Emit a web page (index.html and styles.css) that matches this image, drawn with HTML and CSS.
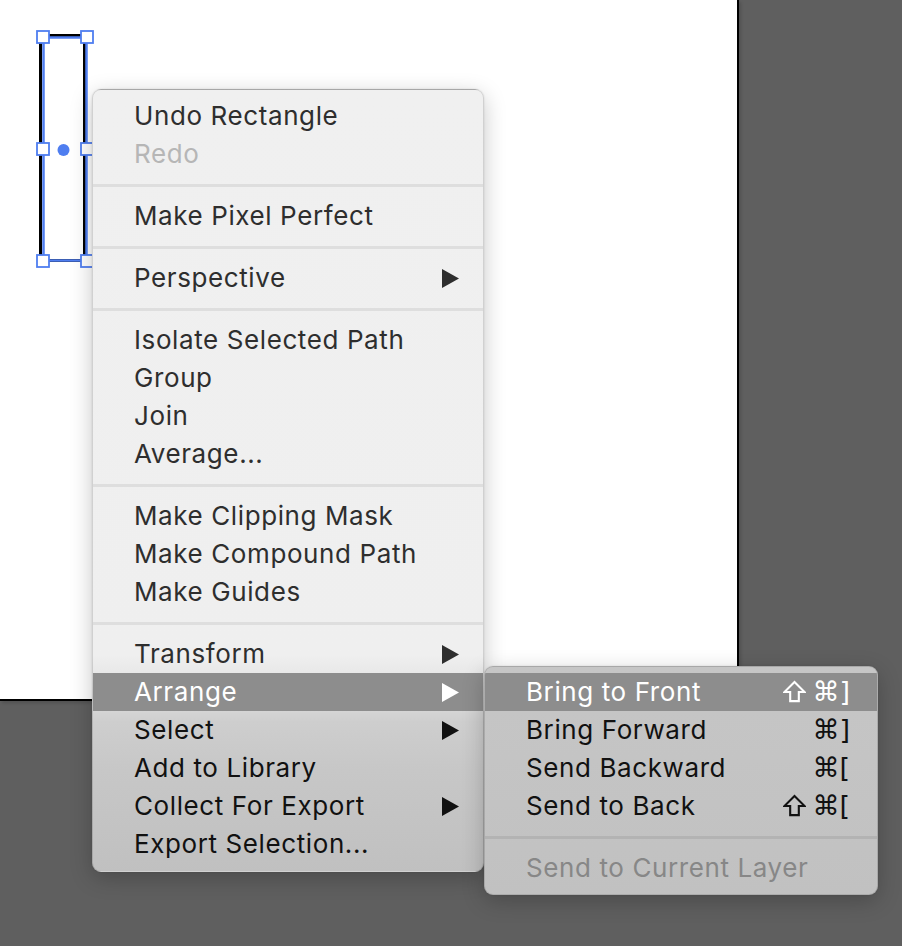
FILE: index.html
```html
<!DOCTYPE html>
<html>
<head>
<meta charset="utf-8">
<link rel="stylesheet" href="styles.css">
</head>
<body>
<div class="stage">
  <div class="artboard">
    <svg class="selection" width="100" height="280" viewBox="0 0 100 280">
      <rect x="40.5" y="35.5" width="44" height="225" fill="none" stroke="#000" stroke-width="3"/>
      <rect x="43.5" y="37.5" width="43" height="223" fill="none" stroke="#4f7ef0" stroke-width="2.5"/>
      <rect x="37" y="31" width="12" height="12" fill="#fff" stroke="#4f7ef0" stroke-width="1.8"/>
      <rect x="81" y="31" width="12" height="12" fill="#fff" stroke="#4f7ef0" stroke-width="1.8"/>
      <rect x="37" y="143" width="12" height="12" fill="#fff" stroke="#4f7ef0" stroke-width="1.8"/>
      <rect x="81" y="143" width="12" height="12" fill="#fff" stroke="#4f7ef0" stroke-width="1.8"/>
      <rect x="37" y="255" width="12" height="12" fill="#fff" stroke="#4f7ef0" stroke-width="1.8"/>
      <rect x="81" y="255" width="12" height="12" fill="#fff" stroke="#4f7ef0" stroke-width="1.8"/>
      <circle cx="63.5" cy="150" r="6" fill="#4f7ef0"/>
    </svg>
  </div>

  <div class="menu main-menu">
    <div class="item">Undo Rectangle</div>
    <div class="item disabled">Redo</div>
    <div class="sep"></div>
    <div class="item">Make Pixel Perfect</div>
    <div class="sep"></div>
    <div class="item"><span>Perspective</span><svg class="arrow" viewBox="0 0 17 19"><path d="M0 0 L17 9.5 L0 19 Z"/></svg></div>
    <div class="sep"></div>
    <div class="item">Isolate Selected Path</div>
    <div class="item">Group</div>
    <div class="item">Join</div>
    <div class="item">Average...</div>
    <div class="sep"></div>
    <div class="item">Make Clipping Mask</div>
    <div class="item">Make Compound Path</div>
    <div class="item">Make Guides</div>
    <div class="sep"></div>
    <div class="item"><span>Transform</span><svg class="arrow" viewBox="0 0 17 19"><path d="M0 0 L17 9.5 L0 19 Z"/></svg></div>
    <div class="item active"><span>Arrange</span><svg class="arrow" viewBox="0 0 17 19"><path d="M0 0 L17 9.5 L0 19 Z"/></svg></div>
    <div class="item dark"><span>Select</span><svg class="arrow" viewBox="0 0 17 19"><path d="M0 0 L17 9.5 L0 19 Z"/></svg></div>
    <div class="item dark">Add to Library</div>
    <div class="item dark"><span>Collect For Export</span><svg class="arrow" viewBox="0 0 17 19"><path d="M0 0 L17 9.5 L0 19 Z"/></svg></div>
    <div class="item dark">Export Selection...</div>
  </div>

  <div class="menu sub-menu">
    <div class="item active"><span>Bring to Front</span><span class="key"><svg class="shift" viewBox="0 0 24 24" aria-label="Shift"><path d="M12 2 L22.5 12.5 L16.5 12.5 L16.5 22 L7.5 22 L7.5 12.5 L1.5 12.5 Z"/></svg>⌘]</span></div>
    <div class="item dark"><span>Bring Forward</span><span class="key">⌘]</span></div>
    <div class="item dark"><span>Send Backward</span><span class="key">⌘[</span></div>
    <div class="item dark"><span>Send to Back</span><span class="key"><svg class="shift" viewBox="0 0 24 24" aria-label="Shift"><path d="M12 2 L22.5 12.5 L16.5 12.5 L16.5 22 L7.5 22 L7.5 12.5 L1.5 12.5 Z"/></svg>⌘[</span></div>
    <div class="sep"></div>
    <div class="item disabled">Send to Current Layer</div>
  </div>
</div>
</body>
</html>
```

FILE: styles.css
```css
html, body {
  margin: 0;
  padding: 0;
}

body {
  background: #5f5f5f;
  width: 902px;
  height: 946px;
  overflow: hidden;
  font-family: Inter, "Liberation Sans", sans-serif;
}

.stage {
  position: relative;
  width: 902px;
  height: 946px;
}

.artboard {
  position: relative;
  width: 737px;
  height: 699px;
  background: #ffffff;
  border-right: 2px solid #000;
  border-bottom: 2px solid #000;
  box-shadow: 2px 2px 3px rgba(0, 0, 0, 0.15);
}

.selection {
  position: absolute;
  left: 0;
  top: 0;
}

.menu {
  position: absolute;
  box-sizing: border-box;
  border: 1px solid rgba(0, 0, 0, 0.13);
  border-radius: 9px;
  overflow: hidden;
  display: flex;
  flex-direction: column;
  box-shadow: 0 6px 22px rgba(0, 0, 0, 0.22), 0 0 2px rgba(0, 0, 0, 0.12);
}

.main-menu {
  left: 92px;
  top: 89px;
  width: 392px;
  height: 783px;
  padding: 7px 0 8px;
  background: linear-gradient(to bottom,
    #f0f0f0 0px,
    #efefef 565px,
    #e2e2e2 600px,
    #cecece 632px,
    #c7c7c7 680px,
    #c0c0c0 783px);
  z-index: 1;
}

.sub-menu {
  left: 484px;
  top: 666px;
  width: 394px;
  height: 229px;
  padding: 6px 0 7px;
  background: linear-gradient(to bottom, #c6c6c6 0%, #c1c1c1 100%);
  z-index: 2;
}

.item {
  height: 38px;
  line-height: 38px;
  padding: 0 24px 0 41px;
  display: flex;
  align-items: center;
  justify-content: space-between;
  font-size: 26px;
  letter-spacing: 0.6px;
  color: #2e2e2e;
  white-space: nowrap;
  flex: none;
}

.sub-menu .item {
  padding-right: 27px;
}

.item.dark {
  color: #111111;
}

.item.disabled {
  color: #b6b6b6;
}

.sub-menu .item.disabled {
  color: #878787;
}

.item.active {
  background: #8d8d8d;
  color: #ffffff;
}

.arrow {
  width: 17px;
  height: 19px;
  fill: currentColor;
  flex: none;
}

.key {
  display: flex;
  align-items: center;
  font-family: "DejaVu Sans", sans-serif;
  font-size: 27px;
  letter-spacing: 0;
}

.shift {
  width: 23px;
  height: 23px;
  margin-right: 6px;
  margin-top: -2px;
  fill: none;
  stroke: currentColor;
  stroke-width: 2.2;
  stroke-linejoin: miter;
  flex: none;
}

.sep {
  height: 3px;
  margin: 11px 0 10px;
  background: #dedede;
  flex: none;
}

.sub-menu .sep {
  background: #b3b3b3;
}
```
